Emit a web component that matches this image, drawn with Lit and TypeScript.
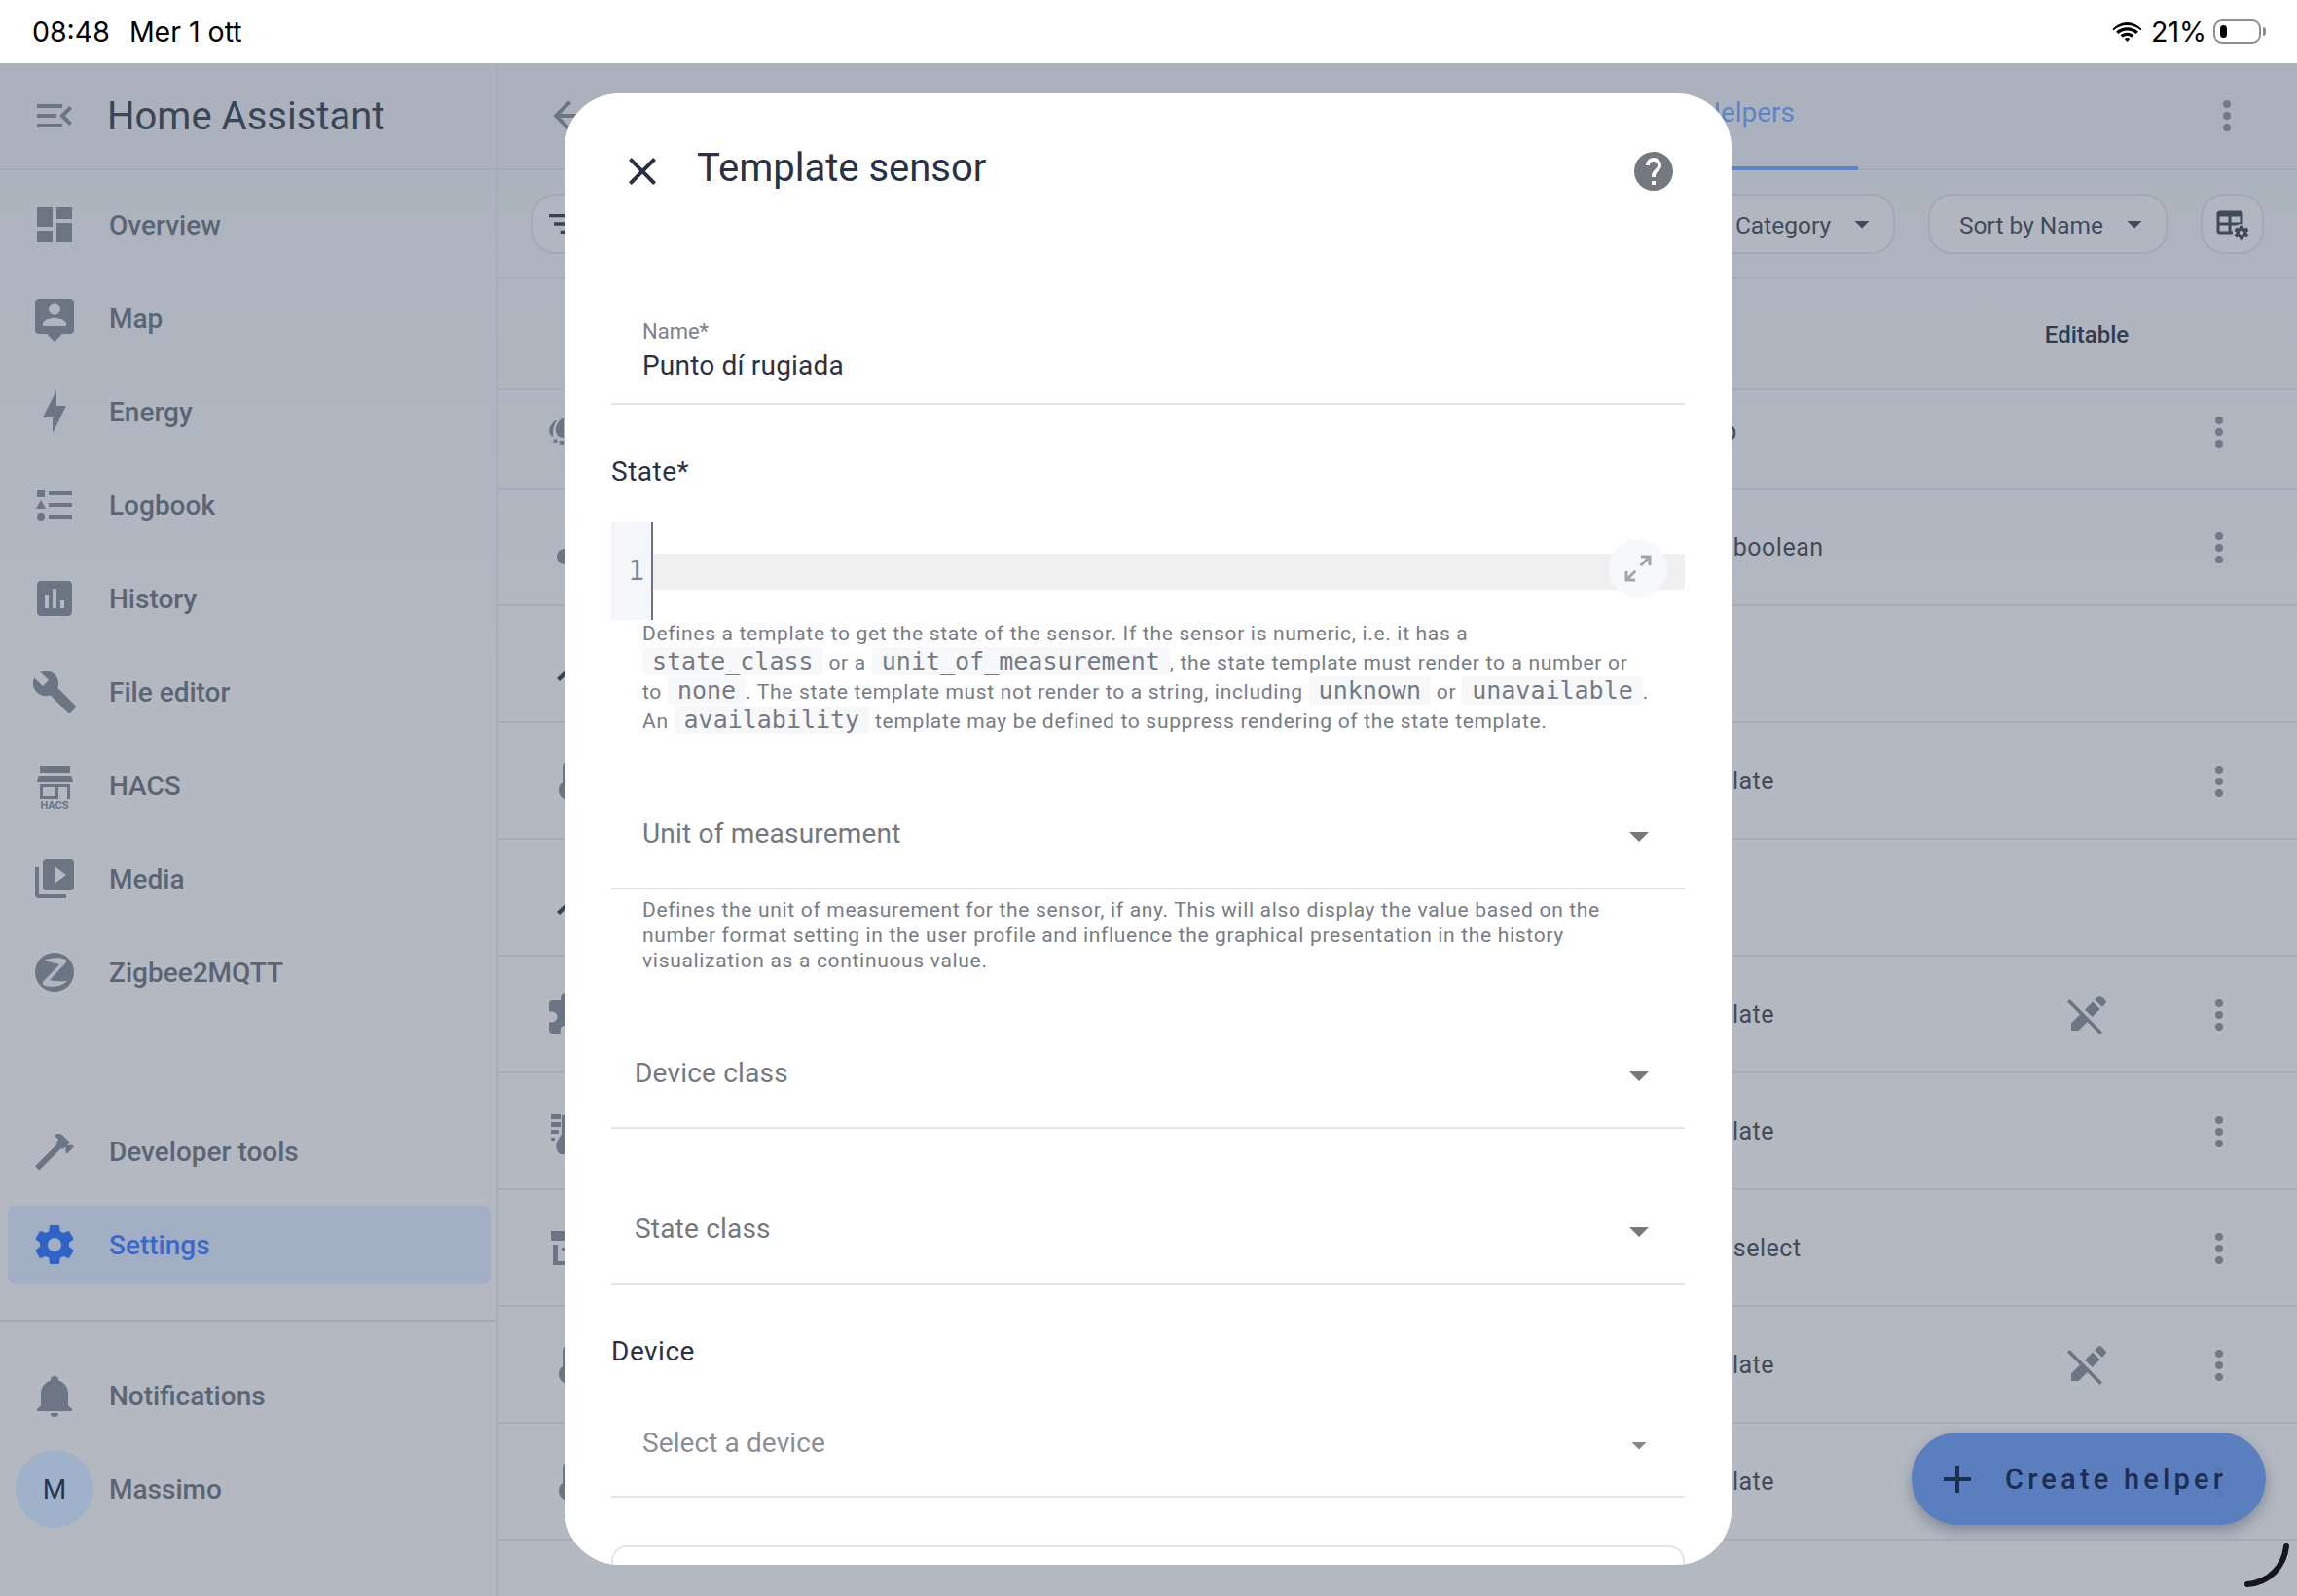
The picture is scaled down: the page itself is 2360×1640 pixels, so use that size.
import { LitElement, html, css } from "lit";
import { customElement } from "lit/decorators.js";

const P = {
  menu: "M21,15.61L19.59,17L14.58,12L19.59,7L21,8.39L17.44,12L21,15.61M3,6H16V8H3V6M3,13V11H13V13H3M3,18V16H16V18H3Z",
  dash: "M13,3V9H21V3M13,21H21V11H13M3,21H11V15H3M3,13H11V3H3V13Z",
  map: "M20 2H4C2.9 2 2 2.9 2 4V18C2 19.1 2.9 20 4 20H8L12 24L16 20H20C21.1 20 22 19.1 22 18V4C22 2.9 21.1 2 20 2M12 4.3C13.66 4.3 15 5.64 15 7.3S13.66 10.3 12 10.3 9 8.96 9 7.3 10.34 4.3 12 4.3M18 16H6V15C6 13 10 11.9 12 11.9S18 13 18 15V16Z",
  bolt: "M11 15H6L13 1V9H18L11 23V15Z",
  list: "M5,9.5L7.5,14H2.5L5,9.5M3,4H7V8H3V4M5,20A2,2 0 0,0 7,18A2,2 0 0,0 5,16A2,2 0 0,0 3,18A2,2 0 0,0 5,20M9,5V7H21V5H9M9,19H21V17H9V19M9,13H21V11H9V13Z",
  chart: "M19 3H5C3.9 3 3 3.9 3 5V19C3 20.1 3.9 21 5 21H19C20.1 21 21 20.1 21 19V5C21 3.9 20.1 3 19 3M9 17H7V10H9V17M13 17H11V7H13V17M17 17H15V13H17V17Z",
  wrench: "M22.7,19L13.6,9.9C14.5,7.6 14,4.9 12.1,3C10.1,1 7.1,0.6 4.7,1.7L9,6L6,9L1.6,4.7C0.4,7.1 0.9,10.1 2.9,12.1C4.8,14 7.5,14.5 9.8,13.6L18.9,22.7C19.3,23.1 19.9,23.1 20.3,22.7L22.6,20.4C23.1,20 23.1,19.3 22.7,19Z",
  media: "M4,6H2V20A2,2 0 0,0 4,22H18V20H4V6M20,2H8A2,2 0 0,0 6,4V16A2,2 0 0,0 8,18H20A2,2 0 0,0 22,16V4A2,2 0 0,0 20,2M12,14.5V5.5L18,10L12,14.5Z",
  hammer: "M2 19.63L13.43 8.2L12.72 7.5L14.14 6.07L12 3.89C13.2 2.7 15.09 2.7 16.27 3.89L19.87 7.5L18.45 8.91H21.29L22 9.62L18.45 13.21L17.74 12.5V9.62L16.27 11.04L15.56 10.33L4.13 21.76L2 19.63Z",
  cog: "M12,15.5A3.5,3.5 0 0,1 8.5,12A3.5,3.5 0 0,1 12,8.5A3.5,3.5 0 0,1 15.5,12A3.5,3.5 0 0,1 12,15.5M19.43,12.97C19.47,12.65 19.5,12.33 19.5,12C19.5,11.67 19.47,11.34 19.43,11L21.54,9.37C21.73,9.22 21.78,8.95 21.66,8.73L19.66,5.27C19.54,5.05 19.27,4.96 19.05,5.05L16.56,6.05C16.04,5.66 15.5,5.32 14.87,5.07L14.5,2.42C14.46,2.18 14.25,2 14,2H10C9.75,2 9.54,2.18 9.5,2.42L9.13,5.07C8.5,5.32 7.96,5.66 7.44,6.05L4.95,5.05C4.73,4.96 4.46,5.05 4.34,5.27L2.34,8.73C2.21,8.95 2.27,9.22 2.46,9.37L4.57,11C4.53,11.34 4.5,11.67 4.5,12C4.5,12.33 4.53,12.65 4.57,12.97L2.46,14.63C2.27,14.78 2.21,15.05 2.34,15.27L4.34,18.73C4.46,18.95 4.73,19.03 4.95,18.95L7.44,17.94C7.96,18.34 8.5,18.68 9.13,18.93L9.5,21.58C9.54,21.82 9.75,22 10,22H14C14.25,22 14.46,21.82 14.5,21.58L14.87,18.93C15.5,18.67 16.04,18.34 16.56,17.94L19.05,18.95C19.27,19.03 19.54,18.95 19.66,18.73L21.66,15.27C21.78,15.05 21.73,14.78 21.54,14.63L19.43,12.97Z",
  bell: "M21,19V20H3V19L5,17V11C5,7.9 7.03,5.17 10,4.29C10,4.19 10,4.1 10,4A2,2 0 0,1 12,2A2,2 0 0,1 14,4C14,4.1 14,4.19 14,4.29C16.97,5.17 19,7.9 19,11V17L21,19M14,21A2,2 0 0,1 12,23A2,2 0 0,1 10,21",
  close: "M19,6.41L17.59,5L12,10.59L6.41,5L5,6.41L10.59,12L5,17.59L6.41,19L12,13.41L17.59,19L19,17.59L13.41,12L19,6.41Z",
  help: "M15.07,11.25L14.17,12.17C13.45,12.89 13,13.5 13,15H11V14.5C11,13.39 11.45,12.39 12.17,11.67L13.41,10.41C13.78,10.05 14,9.55 14,9C14,7.89 13.1,7 12,7A2,2 0 0,0 10,9H8A4,4 0 0,1 12,5A4,4 0 0,1 16,9C16,9.88 15.64,10.67 15.07,11.25M13,19H11V17H13M12,2A10,10 0 0,0 2,12A10,10 0 0,0 12,22A10,10 0 0,0 22,12C22,6.47 17.5,2 12,2Z",
  expand: "M10,21V19H6.41L10.91,14.5L9.5,13.09L5,17.59V14H3V21H10M14.5,10.91L19,6.41V10H21V3H14V5H17.59L13.09,9.5L14.5,10.91Z",
  dots: "M12,16A2,2 0 0,1 14,18A2,2 0 0,1 12,20A2,2 0 0,1 10,18A2,2 0 0,1 12,16M12,10A2,2 0 0,1 14,12A2,2 0 0,1 12,14A2,2 0 0,1 10,12A2,2 0 0,1 12,10M12,4A2,2 0 0,1 14,6A2,2 0 0,1 12,8A2,2 0 0,1 10,6A2,2 0 0,1 12,4Z",
  pencilOff: "M18.66,2C18.4,2 18.16,2.09 17.97,2.28L16.13,4.13L19.88,7.88L21.72,6.03C22.11,5.64 22.11,5 21.72,4.63L19.38,2.28C19.18,2.09 18.91,2 18.66,2M3.28,4L2,5.28L8.5,11.75L4,16.25V20H7.75L12.25,15.5L18.72,22L20,20.72L13.5,14.25L9.75,10.5L3.28,4M15.06,5.19L11.03,9.22L14.78,12.97L18.81,8.94L15.06,5.19Z",
  tableCog: "M3 3H17C18.11 3 19 3.9 19 5V12.08C17.45 11.82 15.92 12.18 14.68 13H11V17H12.08C11.97 17.68 11.97 18.35 12.08 19H3C1.9 19 1 18.11 1 17V5C1 3.9 1.9 3 3 3M3 7V11H9V7H3M11 7V11H17V7H11M3 13V17H9V13H3M22.78 19.32L21.71 18.5C21.73 18.33 21.75 18.17 21.75 18S21.74 17.67 21.71 17.5L22.77 16.68C22.86 16.6 22.89 16.47 22.83 16.36L21.83 14.63C21.77 14.5 21.64 14.5 21.5 14.5L20.28 15C20 14.82 19.74 14.65 19.43 14.53L19.24 13.21C19.23 13.09 19.12 13 19 13H17C16.88 13 16.77 13.09 16.75 13.21L16.56 14.53C16.26 14.66 15.97 14.82 15.71 15L14.47 14.5C14.36 14.5 14.23 14.5 14.16 14.63L13.16 16.36C13.1 16.47 13.12 16.6 13.22 16.68L14.28 17.5C14.26 17.67 14.25 17.83 14.25 18S14.26 18.33 14.28 18.5L13.22 19.32C13.13 19.4 13.1 19.53 13.16 19.64L14.16 21.37C14.22 21.5 14.35 21.5 14.47 21.5L15.71 21C15.97 21.18 16.25 21.35 16.56 21.47L16.75 22.79C16.77 22.91 16.87 23 17 23H19C19.12 23 19.23 22.91 19.25 22.79L19.44 21.47C19.74 21.34 20 21.18 20.28 21L21.5 21.5C21.64 21.5 21.77 21.5 21.84 21.37L22.84 19.64C22.9 19.53 22.87 19.4 22.78 19.32M18 19.5C17.17 19.5 16.5 18.83 16.5 18S17.18 16.5 18 16.5 19.5 17.17 19.5 18 18.84 19.5 18 19.5Z",
  filter: "M6,13H18V11H6M3,6V8H21V6M10,18H14V16H10V18Z",
  back: "M20,11V13H8L13.5,18.5L12.08,19.92L4.16,12L12.08,4.08L13.5,5.5L8,11H20Z",
  plus: "M19,13H13V19H11V13H5V11H11V5H13V11H19V13Z",
  down: "M7,10L12,15L17,10H7Z",
  thermo: "M15 13V5A3 3 0 0 0 9 5V13A5 5 0 1 0 15 13Z",
  puzzle: "M20.5,11H19V7C19,5.89 18.1,5 17,5H13V3.5A2.5,2.5 0 0,0 10.5,1A2.5,2.5 0 0,0 8,3.5V5H4A2,2 0 0,0 2,7V10.8H3.5C5,10.8 6.2,12 6.2,13.5C6.2,15 5,16.2 3.5,16.2H2V20A2,2 0 0,0 4,22H7.8V20.5C7.8,19 9,17.8 10.5,17.8C12,17.8 13.2,19 13.2,20.5V22H17A2,2 0 0,0 19,20V16H20.5A2.5,2.5 0 0,0 23,13.5A2.5,2.5 0 0,0 20.5,11Z",
  drops: "M5.200 6.500C2.800 8.500 1.600 11 2.300 13C2.700 14 3.400 14.700 4.300 15C3.600 12.300 4.200 9.300 6 6.500ZM8.500 5.500C6.500 7.300 5 9.800 5.500 12.300C5.900 14.200 7.300 15.500 9.500 15.500V17H7.200L7.800 19H9.500V5.500ZM4.300 16.200H6.200V18H4.300Z",
  lines: "M3 3.500H8V6H3ZM3 7.500H8V10H3ZM3 11.500H7V13.500H3ZM3 15.500H5V17H3ZM8.500 13.800V4H24V24H8C5.500 23 5 19 6.500 17C7 15.800 8 14.800 8.500 13.800Z",
  box: "M3 3.500H24V8.500H3ZM4 10.500H6.500V19H24V21H4ZM8.500 12H10.500V13.500H8.500Z",
  knob: "M10 13A4 4 0 1 0 10 21A4 4 0 1 0 10 13Z",
  slash: "M6 19.500L14 12L15.500 13.500L7.500 21Z",
};

const Ic = (d: string, cls = "") => html`<svg class="ic ${cls}" viewBox="0 0 24 24"><path d=${d}></path></svg>`;

const hacs = html`<svg class="ic" viewBox="0 0 48 48">
  <path d="M9 4H40V11H9ZM7.5 14H41.5L43 21H6ZM9 23H40V38H37V26H28V38H9ZM12 26V35H25V26Z"></path>
  <text class="hacs" x="24" y="48" text-anchor="middle">HACS</text>
</svg>`;
const zigbee = html`<svg class="ic" viewBox="0 0 48 48">
  <circle cx="24" cy="24" r="20"></circle>
  <path class="zcut" d="M13 12C20 8.500 30 8.500 36 11L36 14L19 32C24 33.500 31 33.500 37 33C31 39.500 19 40 12 37L12 34L29 16C24 14.500 18 13.500 13 12Z"></path>
</svg>`;

const NAV: [any, string][] = [
  [Ic(P.dash), "Overview"],
  [Ic(P.map), "Map"],
  [Ic(P.bolt), "Energy"],
  [Ic(P.list), "Logbook"],
  [Ic(P.chart), "History"],
  [Ic(P.wrench), "File editor"],
  [hacs, "HACS"],
  [Ic(P.media), "Media"],
  [zigbee, "Zigbee2MQTT"],
];

type Row = { icon?: string; dark?: boolean; type?: string; locked?: boolean; menu?: boolean; cls?: string };
const ROWS: Row[] = [
  { icon: P.drops, type: "Group", menu: true, cls: "first" },
  { icon: P.knob, type: "Input boolean", menu: true },
  { icon: P.slash, dark: true },
  { icon: P.thermo, type: "Template", menu: true },
  { icon: P.slash, dark: true },
  { icon: P.puzzle, type: "Template", locked: true, menu: true },
  { icon: P.lines, type: "Template", menu: true },
  { icon: P.box, type: "Input select", menu: true },
  { icon: P.thermo, type: "Template", locked: true, menu: true },
  { icon: P.thermo, type: "Template", menu: true },
];

@customElement("app-root")
export class AppRoot extends LitElement {
  static styles = css`
    :host { display: block; position: relative; width: 2360px; height: 1640px; overflow: hidden; font-family: Roboto, sans-serif; background: #b2b7c1; }
    * { box-sizing: border-box; }
    .ic { display: block; flex: none; width: 48px; height: 48px; fill: #6b7583; overflow: visible; }
    .status { height: 65px; background: #fff; display: flex; align-items: center; padding: 0 33px; font-family: Inter, sans-serif; font-size: 28.5px; color: #000; }
    .status .date { margin-left: 20px; }
    .status .right { margin-left: auto; display: flex; align-items: center; margin-right: -3px; }
    .wifi { width: 31px; height: 22px; fill: #000; }
    .pct { margin: 0 7px 0 9px; }
    .batt { width: 49px; height: 25px; border: 2px solid #8e8e8e; border-radius: 9px; padding: 4px 5px; }
    .batt i { display: block; width: 7px; height: 100%; background: #000; border-radius: 4px; }
    .nub { width: 3px; height: 9px; margin-left: 2px; background: #8e8e8e; border-radius: 0 3px 3px 0; margin-right: 2px; }
    .body { display: flex; height: 1575px; background: linear-gradient(#abb3be, #b3b8c1 40%); }
    .side { width: 512px; flex: none; border-right: 2px solid #a7aeb9; display: flex; flex-direction: column; }
    .side-head { height: 110px; flex: none; border-bottom: 2px solid #a3aab6; display: flex; align-items: center; padding-left: 32px; gap: 30px; font-size: 40px; color: #3a4555; background: #abb2be; }
    .nav { padding-top: 8px; display: flex; flex-direction: column; }
    .item { height: 80px; margin: 8px 6px 8px 8px; flex: none; border-radius: 8px; display: flex; align-items: center; padding-left: 24px; gap: 32px; font-size: 28px; font-weight: 500; color: #5a6575; }
    .item.dev { margin-top: 96px; }
    .item.on { background: #a2aec3; color: #3b69c8; }
    .item.on .ic { fill: #3163c6; }
    .divider { height: 2px; margin-top: 29px; margin-bottom: 28px; background: #a3aab6; flex: none; }
    .item.me { padding-left: 8px; gap: 16px; }
    .avatar { width: 80px; height: 80px; border-radius: 50%; background: #a0b2c9; color: #27374d; display: flex; align-items: center; justify-content: center; font-weight: 400; font-size: 28px; }
    .main { flex: 1; min-width: 0; display: flex; flex-direction: column; }
    .tool { height: 110px; flex: none; border-bottom: 2px solid #a3aab6; display: flex; align-items: center; padding: 0 48px; background: #abb2be; }
    .tab { margin-left: auto; margin-right: 355px; width: 226px; height: 108px; position: relative; display: flex; align-items: center; justify-content: center; color: #5f83c4; font-size: 28px; font-weight: 400; padding-bottom: 8px; align-self: flex-start; }
    .tab::after { content: ""; position: absolute; left: 0; right: 0; bottom: -2px; height: 4px; background: #5f83c4; }
    .kebab { fill: #737a85; }
    .chips { height: 112px; flex: none; border-bottom: 2px solid #a7adb8; display: flex; align-items: center; gap: 34px; padding: 0 34px; }
    .chip { height: 62px; border: 2px solid #a3aab6; border-radius: 24px; background: #b1b6c1; display: flex; align-items: center; font-size: 24.5px; color: #414b5a; flex: none; }
    .chip span { margin-top: 2px; }
    .chip .ic { width: 40px; height: 40px; fill: #394250; }
    .chip.filter { width: 300px; padding-left: 11px; }
    .chip.filter .ic { fill: #394250; }
    .chip.cat { margin-left: auto; width: 247px; justify-content: flex-end; padding-right: 14px; gap: 14px; }
    .chip.sort { width: 246px; padding-left: 30px; gap: 14px; }
    .chip.cat .ic, .chip.sort .ic { fill: #414b5a; width: 36px; height: 36px; }
    .chip.tbl { width: 65px; justify-content: center; }
    .chip.tbl .ic { width: 36px; height: 36px; fill: #3f4958; }
    .row { display: grid; grid-template-columns: 1155px 343px 172px 100px; padding-left: 48px; align-items: center; height: 120px; border-bottom: 2px solid #a7adb8; flex: none; }
    .row.head { height: 114px; padding-top: 2px; }
    .row.first { height: 102px; padding-bottom: 16px; }
    .row .ic.dark { fill: #39424f; }
    .cell-c { display: flex; justify-content: center; margin-top: 2px; }
    .type { font-size: 25px; letter-spacing: 0.5px; color: #414b5a; white-space: nowrap; }
    .edit-h { font-size: 24px; font-weight: 500; color: #323c4d; text-align: center; }
    .modal { position: absolute; left: 580px; top: 96px; width: 1199px; height: 1512px; background: #fff; border-radius: 56px; overflow: hidden; padding: 0 48px; }
    .m-head { display: flex; align-items: center; margin: 0 8px; padding-top: 56px; height: 104px; }
    .m-head .ic { fill: #2a3142; }
    .m-title { margin-left: 32px; font-size: 40px; color: #2a3142; margin-bottom: 8px; }
    .m-head .ic.helpi { margin-left: auto; fill: #74787f; }
    .name { margin-top: 125px; padding: 0 32px 18px; border-bottom: 2px solid #e4e5e9; }
    .name label { display: block; font-size: 22px; line-height: 32px; color: #7d8289; }
    .name div { font-size: 28px; line-height: 40px; letter-spacing: .2px; color: #2a3142; margin-top: -1px; }
    .h { font-size: 28px; line-height: 40px; color: #2a3142; letter-spacing: .5px; }
    .h.state { margin-top: 49px; }
    .h.dev { margin-top: 49px; }
    .code { margin-top: 31px; height: 101px; display: flex; position: relative; }
    .gutter { width: 43px; flex: none; background: #f4f6f9; border-right: 2px solid #6b7280; display: flex; align-items: center; justify-content: flex-end; padding: 0 7px 0 0; font: 28px "DejaVu Sans Mono", monospace; color: #7c8599; }
    .active { flex: 1; height: 37px; margin-top: 33px; background: #f0f0f0; }
    .expand { position: absolute; right: 18px; top: 18px; width: 60px; height: 60px; border-radius: 50%; background: #f6f8fb; display: flex; align-items: center; justify-content: center; }
    .expand .ic { width: 36px; height: 36px; fill: #a0a4ab; }
    .help { padding-left: 32px; font-size: 21px; line-height: 30px; letter-spacing: .68px; color: #777c84; white-space: nowrap; }
    .help.a { margin-top: -1px; }
    .help.b { line-height: 26px; margin-top: 8px; }
    code { font: 25px "DejaVu Sans Mono", monospace; letter-spacing: 0; background: #f6f8fa; padding: 0 10px; border-radius: 4px; color: #757a82; line-height: 1; }
    .sel { height: 113px; padding: 36px 23px 0 32px; display: flex; align-items: flex-start; border-bottom: 2px solid #e4e5e9; font-size: 28px; line-height: 40px; letter-spacing: .2px; color: #73787f; flex: none; }
    .sel .ic { margin-left: auto; fill: #76787c; margin-top: -2px; }
    .sel.in { padding-left: 24px; }
    .sel.u { margin-top: 46px; height: 112px; padding-top: 35px; }
    .sel.d { margin-top: 47px; }
    .sel.s { margin-top: 47px; }
    .sel.x { margin-top: 18px; height: 112px; color: #8a8f96; padding-right: 29px; letter-spacing: .1px; }
    .sel.x .ic { width: 36px; height: 36px; margin-top: 4px; fill: #85888e; }
    .outline { margin-top: 49px; height: 90px; border: 2px solid #e4e5e9; border-radius: 16px; }
    .fab { position: absolute; left: 1964px; top: 1472px; width: 364px; height: 95px; border-radius: 48px; background: rgba(85,122,190,.95); box-shadow: 0 6px 14px rgba(60,70,90,.4); display: flex; align-items: center; padding-left: 23px; gap: 25px; font-size: 29px; font-weight: 500; letter-spacing: 4.2px; color: #1e2d52; white-space: nowrap; }
    .fab .ic { fill: #1e2d52; }
    .swipe { position: absolute; left: 2300px; top: 1580px; width: 60px; height: 60px; fill: none; stroke: #14181c; stroke-width: 6px; stroke-linecap: round; }
    .hacs { font: 700 11px Roboto, sans-serif; }
    .zcut { fill: #b0b6c1; }
  `;

  render() {
    return html`
      <div class="status">
        <span>08:48</span><span class="date">Mer 1 ott</span>
        <div class="right">
          <svg class="wifi" viewBox="0 0 30 22"><path d="M15 4C9.500 4 4.800 6 1.200 9.300L0 8C4 4 9.200 1 15 1S26 4 30 8L28.800 9.300C25.200 6 20.500 4 15 4ZM15 9.500C11.500 9.500 8.400 10.800 6 13L3.500 10.700C6.500 7.900 10.500 6.200 15 6.200S23.500 7.900 26.500 10.700L24 13C21.600 10.800 18.500 9.500 15 9.500ZM15 15C13.300 15 11.700 15.600 10.500 16.700L8 14.300C9.900 12.700 12.300 11.700 15 11.700S20.100 12.700 22 14.300L19.500 16.700C18.300 15.600 16.700 15 15 15ZM15 17C16 17 17 17.400 17.800 18.100L15 21L12.200 18.100C13 17.400 14 17 15 17Z"></path></svg>
          <span class="pct">21%</span>
          <div class="batt"><i></i></div><div class="nub"></div>
        </div>
      </div>
      <div class="body">
        <aside class="side">
          <div class="side-head">${Ic(P.menu)}<span>Home Assistant</span></div>
          <div class="nav">
            ${NAV.map(([i, t]) => html`<div class="item">${i}<span>${t}</span></div>`)}
            <div class="item dev">${Ic(P.hammer)}<span>Developer tools</span></div>
            <div class="item on">${Ic(P.cog)}<span>Settings</span></div>
          </div>
          <div class="divider"></div>
          <div class="item">${Ic(P.bell)}<span>Notifications</span></div>
          <div class="item me"><div class="avatar">M</div><span>Massimo</span></div>
        </aside>
        <main class="main">
          <div class="tool">
            ${Ic(P.back)}
            <div class="tab">Helpers</div>
            ${Ic(P.dots, "kebab")}
          </div>
          <div class="chips">
            <div class="chip filter">${Ic(P.filter)}</div>
            <div class="chip cat"><span>Category</span>${Ic(P.down)}</div>
            <div class="chip sort"><span>Sort by Name</span>${Ic(P.down)}</div>
            <div class="chip tbl">${Ic(P.tableCog)}</div>
          </div>
          <div class="row head"><span></span><span></span><div class="edit-h">Editable</div><span></span></div>
          ${ROWS.map(
            (r) => html`<div class="row ${r.cls || ""}">
              <div>${r.icon ? Ic(r.icon, r.dark ? "dark" : "") : ""}</div>
              <div class="type">${r.type || ""}</div>
              <div class="cell-c">${r.locked ? Ic(P.pencilOff) : ""}</div>
              <div class="cell-c">${r.menu ? Ic(P.dots, "kebab") : ""}</div>
            </div>`
          )}
        </main>
      </div>

      <section class="modal">
        <div class="m-head">
          ${Ic(P.close)}
          <div class="m-title">Template sensor</div>
          ${Ic(P.help, "helpi")}
        </div>
        <div class="name"><label>Name*</label><div>Punto dí rugiada</div></div>
        <div class="h state">State*</div>
        <div class="code">
          <div class="gutter">1</div>
          <div class="active"></div>
          <div class="expand">${Ic(P.expand)}</div>
        </div>
        <div class="help a">
          Defines a template to get the state of the sensor. If the sensor is numeric, i.e. it has a<br />
          <code>state_class</code> or a <code>unit_of_measurement</code>, the state template must render to a number or<br />
          to <code>none</code>. The state template must not render to a string, including <code>unknown</code> or <code>unavailable</code>.<br />
          An <code>availability</code> template may be defined to suppress rendering of the state template.
        </div>
        <div class="sel u"><span>Unit of measurement</span>${Ic(P.down)}</div>
        <div class="help b">
          Defines the unit of measurement for the sensor, if any. This will also display the value based on the<br />
          number format setting in the user profile and influence the graphical presentation in the history<br />
          visualization as a continuous value.
        </div>
        <div class="sel in d"><span>Device class</span>${Ic(P.down)}</div>
        <div class="sel in s"><span>State class</span>${Ic(P.down)}</div>
        <div class="h dev">Device</div>
        <div class="sel x"><span>Select a device</span>${Ic(P.down)}</div>
        <div class="outline"></div>
      </section>

      <div class="fab">${Ic(P.plus)}<span>Create helper</span></div>
      <svg class="swipe" viewBox="0 0 60 60"><path d="M49 9C47 28 33 46 9 48"></path></svg>
    `;
  }
}
